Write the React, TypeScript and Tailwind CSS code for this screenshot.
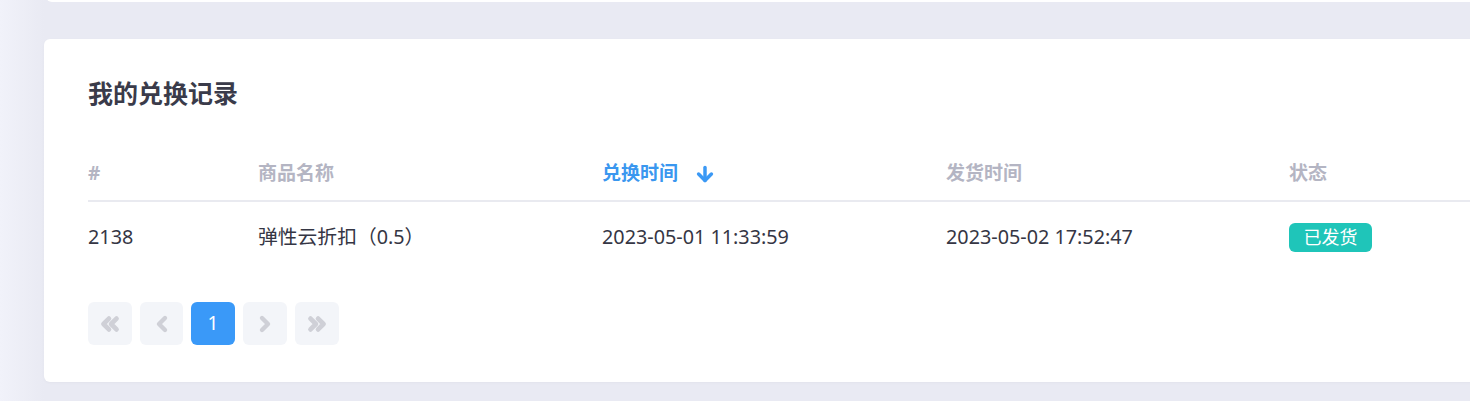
import React from "react";
import { ChevronsLeft, ChevronLeft, ChevronRight, ChevronsRight, ArrowDown } from "lucide-react";

const font = { fontFamily: '"Noto Sans", "Noto Sans CJK SC", sans-serif' };

export default function App() {
  const cols = ["w-[170px]", "w-[344px]", "w-[344px]", "w-[343px]", "w-[200px]"];
  return (
    <div className="relative h-[401px] w-[1470px] overflow-hidden bg-[#e9eaf3]" style={font}>
      <div className="absolute left-0 top-0 h-full w-[44px] bg-gradient-to-r from-[#f1f2fa] to-[#e9eaf3]" />
      <div className="relative pl-[44px]">
        <div className="ml-[2px] -mt-[10px] h-[12px] w-[1500px] rounded-b-[6px] bg-white" />
        <div className="mt-[37px] h-[343px] w-[1500px] rounded-[6px] bg-white pl-[44px] pt-[38px] shadow-[0_1px_3px_rgba(0,0,0,0.03)]">
          <h2 className="h-[32px] text-[25px] font-bold leading-[32px] text-[#3a3b4a]">我的兑换记录</h2>
          <div className="mt-[37px]">
            <div className="flex h-[56px] items-center border-b-2 border-[#e9eaf0] text-[19px] font-bold text-[#b4b5c3]">
              <div className={cols[0]}>#</div>
              <div className={cols[1]}>商品名称</div>
              <div className={`${cols[2]} flex items-center text-[#3a97ef]`}>
                兑换时间
                <ArrowDown className="ml-[16px] mt-[2px]" size={22} strokeWidth={3.8} color="#3b99f5" />
              </div>
              <div className={cols[3]}>发货时间</div>
              <div className={cols[4]}>状态</div>
            </div>
            <div className="flex h-[70px] items-center text-[19.8px] text-[#353644]">
              <div className={cols[0]}>2138</div>
              <div className={cols[1]}>弹性云折扣（0.5）</div>
              <div className={cols[2]}>2023-05-01 11:33:59</div>
              <div className={cols[3]}>2023-05-02 17:52:47</div>
              <div className={cols[4]}>
                <span className="inline-flex h-[29px] w-[83px] items-center justify-center rounded-[6px] bg-[#1fc5b9] text-[18px] text-white">
                  已发货
                </span>
              </div>
            </div>
          </div>
          <div className="mt-[30px] flex gap-[8px]">
            <div className="flex h-[43px] w-[44px] items-center justify-center rounded-[6px] bg-[#f3f5f9]">
              <ChevronsLeft size={26} strokeWidth={4.4} color="#cfd0d7" />
            </div>
            <div className="flex h-[43px] w-[43px] items-center justify-center rounded-[6px] bg-[#f3f5f9]">
              <ChevronLeft size={24} strokeWidth={4.4} color="#cfd0d7" />
            </div>
            <div className="flex h-[43px] w-[44px] items-center justify-center rounded-[6px] bg-[#3a99f8] text-[19px] text-white">
              1
            </div>
            <div className="flex h-[43px] w-[44px] items-center justify-center rounded-[6px] bg-[#f3f5f9]">
              <ChevronRight size={24} strokeWidth={4.4} color="#cfd0d7" />
            </div>
            <div className="flex h-[43px] w-[44px] items-center justify-center rounded-[6px] bg-[#f3f5f9]">
              <ChevronsRight size={26} strokeWidth={4.4} color="#cfd0d7" />
            </div>
          </div>
        </div>
      </div>
    </div>
  );
}
